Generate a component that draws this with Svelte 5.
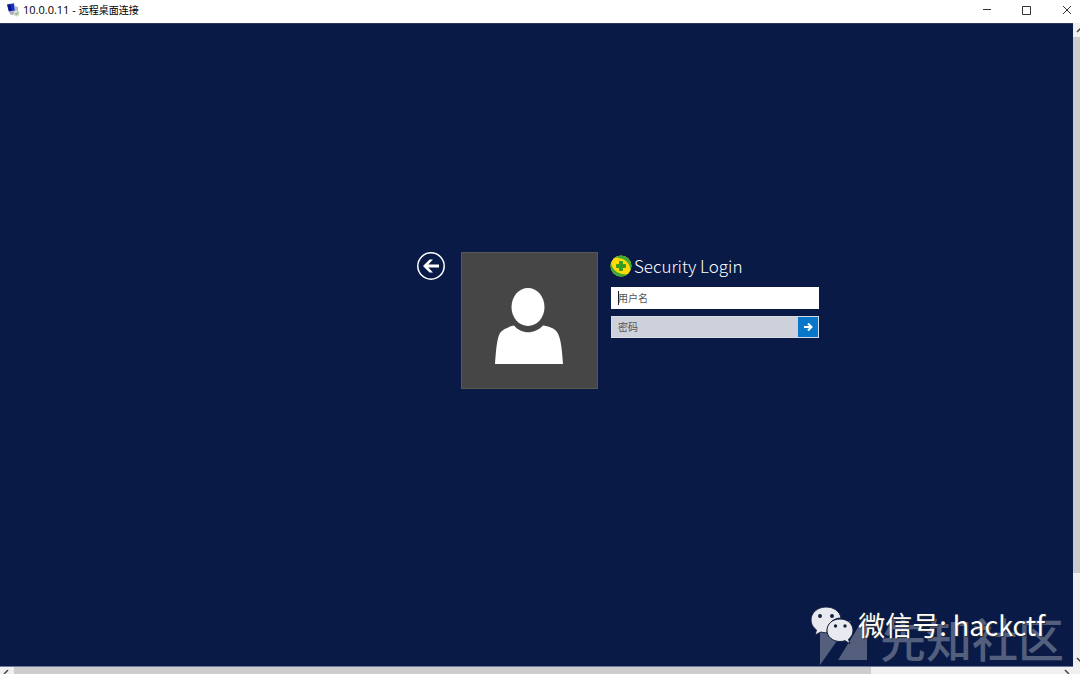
<script>
  let user = $state('');
  let password = $state('');
</script>

<div class="window">
  <header class="titlebar">
    <svg class="app-icon" viewBox="0 0 14 14" aria-hidden="true">
      <path d="M1 1 8 0l1 8-6 1z" fill="#c5cbe0" />
      <path d="M1 1.500 8 .5l.8 7-6 1z" fill="#1730c4" />
      <path d="M1.500 2 4.500 1.500 6 7.500 3 8z" fill="#08158a" />
      <path d="M9 3l3 1v7l-3-1z" fill="#b4b9c8" />
      <path d="M3 9l5-1 2 3-5 1z" fill="#a5a9b7" />
      <circle cx="10.500" cy="10.500" r="3" fill="#d4ddd2" />
      <path d="M9 10.500l1.200 1.200 2-2.500" fill="none" stroke="#6ba35c" />
    </svg>
    <h1>10.0.0.11 - <span>远程桌面连接</span></h1>
    <div class="controls">
      <button aria-label="最小化"><svg viewBox="0 0 10 10"><path d="M1 4.500h8" /></svg></button>
      <button aria-label="最大化"><svg viewBox="0 0 10 10"><path d="M.5 1.500h8v8h-8z" /></svg></button>
      <button aria-label="关闭"><svg viewBox="0 0 10 10"><path d="M1 1l8 8M9 1L1 9" /></svg></button>
    </div>
  </header>

  <main class="desktop">
    <form class="login" onsubmit={(e) => e.preventDefault()}>
      <button type="button" class="back" aria-label="返回">
        <svg viewBox="0 0 28 28">
          <circle cx="14" cy="14" r="13.200" fill="none" stroke="#fff" stroke-width="1.500" />
          <path d="M6 14l6.500-6.500H16L11.300 12.500H22v3H11.300L16 20.500h-3.500z" fill="#fff" />
        </svg>
      </button>
      <div class="avatar">
        <svg viewBox="0 0 68 76" aria-hidden="true">
          <ellipse cx="33" cy="19" rx="16.500" ry="19" />
          <path d="M0 76C1 62 2 50 5 45c3-4 8-6 14-7.500 7 9 21 9 29 0 5 .5 11 2.500 14 6.500 4 6 5 18 6 32z" />
        </svg>
      </div>
      <div class="fields">
        <h2>
          <svg viewBox="0 0 22 22" aria-hidden="true">
            <circle cx="11" cy="11" r="10.500" fill="#ffda08" />
            <path d="M5 2.500C9-.5 16 0 19.500 5c2 3.500 2.300 6.500 1 10C20 9 16 4.500 11 3.500 9 3 7 2.500 5 2.500z" fill="#3daa35" />
            <path d="M17 19.500c-4 3.500-11 2.500-14.500-2.500C.5 13.500 0 11 1 7.500 1.500 13 6 17.500 11 18.700c2 .6 4 .8 6 .8z" fill="#3daa35" />
            <path d="M9.500 6.500h3v3h3v3h-3v3h-3v-3h-3v-3h3z" fill="#359e20" stroke="#359e20" stroke-linejoin="round" />
          </svg>
          Security Login
        </h2>
        <div class="field active">
          <span class="caret"></span>
          <input type="text" aria-label="用户名" placeholder="用户名" bind:value={user} />
        </div>
        <div class="field">
          <input type="password" aria-label="密码" placeholder="密码" bind:value={password} />
          <button class="submit" aria-label="提交">
            <svg viewBox="0 0 10 10"><path d="M1 5h7M5 1.500L8.500 5 5 8.500" /></svg>
          </button>
        </div>
      </div>
    </form>

    <div class="community">
      <svg viewBox="0 0 47 48" aria-hidden="true"><path d="M0 3h31L0 47zM47 3v39H18L42 3z" /></svg>
      <span>先知社区</span>
    </div>
    <div class="wechat">
      <svg viewBox="0 0 42 37" aria-hidden="true">
        <path d="M15 0C6.500 0 0 5.800 0 13c0 4 2 7.500 5.500 10L4 28l6-3c2 .6 3.500.8 6 .8C16 17 22 11 30 11 29 4.500 23 0 15 0z" />
        <path d="M29 12c-7.500 0-13 5-13 11.300S21.500 34.500 29 34.500c1.800 0 3.300-.3 5-.8l5 3-1.500-4.500c3-2.200 4.500-5.200 4.500-8.900C42 17 36.500 12 29 12z" />
        <g class="eyes"><circle cx="9" cy="9" r="2" /><circle cx="21" cy="9" r="2" /><circle cx="24.500" cy="19" r="1.700" /><circle cx="34" cy="19" r="1.700" /></g>
      </svg>
      <span>微信号: hackctf</span>
    </div>
  </main>

  <div class="vbar">
    <svg viewBox="0 0 7 14"><path d="M4 9l4-4" /></svg>
    <div class="track"><div class="thumb"></div></div>
    <svg viewBox="0 0 7 14"><path d="M4 5l4 4" /></svg>
  </div>
  <div class="hbar">
    <svg viewBox="0 0 14 7"><path d="M8 3L4 7" /></svg>
    <div class="track"><div class="thumb"></div></div>
    <svg viewBox="0 0 14 7"><path d="M6 3l4 4" /></svg>
  </div>
</div>

<style>
  :global(body) { margin: 0; }
  * { box-sizing: border-box; }
  .window {
    display: grid;
    grid-template: 23px minmax(0, 1fr) 7px / minmax(0, 1fr) 7px;
    height: 100vh;
    overflow: hidden;
    background: #f0f0f0;
    font-family: "Open Sans", "Noto Sans CJK SC", sans-serif;
  }
  button { padding: 0; border: 0; background: none; display: grid; place-items: center; }
  h1, h2 { margin: 0; }
  .titlebar { grid-column: 1 / -1; display: flex; align-items: center; padding-left: 6px; gap: 3px; background: #fff; padding-bottom: 3px; }
  .app-icon { width: 14px; height: 14px; }
  h1 { font-size: 11px; font-weight: 400; color: #000; line-height: 20px; }
  h1 span { font-size: 10px; }
  .controls { display: flex; margin-left: auto; }
  .controls button { width: 40px; height: 20px; }
  .controls button:last-child { width: 26px; margin-left: 7px; }
  .controls svg { width: 10px; height: 10px; fill: none; stroke: #333; stroke-width: 1; }
  .desktop { position: relative; background: #081a45; border-top: 1px solid #29375c; border-bottom: 1px solid #6f7b96; overflow: hidden; }
  .login { display: flex; align-items: flex-start; padding: 228px 0 0 417px; }
  .back { width: 28px; height: 28px; margin-right: 16px; }
  .back svg { width: 28px; height: 28px; }
  .avatar { width: 137px; height: 137px; background: #464646; border: 1px solid #555850; display: flex; padding: 35px 0 0 33px; }
  .avatar svg { width: 68px; height: 76px; fill: #fff; }
  .fields { width: 208px; margin-left: 13px; display: grid; gap: 7px; }
  h2 { display: flex; align-items: center; gap: 2px; height: 28px; font: 300 17px/28px "Noto Sans CJK SC", sans-serif; color: #fff; white-space: nowrap; }
  h2 svg { width: 22px; height: 22px; margin-left: -1px; }
  .field { display: flex; position: relative; height: 22px; background: #cdd1dc; border: 1px solid #d8dbe3; }
  .field.active { background: #fff; border-color: #fff; }
  input { flex: 1; min-width: 0; padding: 0 6px 1px; border: 0; outline: 0; background: transparent; font: 10px "Noto Sans CJK SC", sans-serif; color: #333; }
  input::placeholder { color: #555; opacity: 1; }
  .caret { position: absolute; left: 6px; top: 3px; width: 1px; height: 14px; background: #222; }
  .submit { width: 20px; height: 20px; background: #0877c9; }
  .submit svg { width: 10px; height: 10px; fill: none; stroke: #fff; stroke-width: 2; }
  .community { position: absolute; right: 9px; bottom: 0; display: flex; align-items: flex-end; gap: 13px; color: #fff; opacity: .3; font: 500 46px/58px "Noto Sans CJK SC", sans-serif; }
  .community svg { width: 47px; height: 48px; fill: #fff; }
  .wechat { position: absolute; right: 28px; bottom: 21px; display: flex; align-items: center; gap: 5px; color: #fff; font: 27px/40px "Noto Sans CJK SC", sans-serif; text-shadow: 1px 1px 1px #333; white-space: nowrap; }
  .wechat svg { width: 42px; height: 37px; fill: #e8eaf0; stroke: #17233f; stroke-width: 1; }
  .wechat .eyes { fill: #17233f; stroke: none; }
  .vbar { display: flex; flex-direction: column; }
  .vbar svg { width: 7px; height: 14px; }
  .track { flex: 1; }
  .vbar .thumb { height: 87%; background: #cdcdcd; }
  .hbar { display: flex; grid-column: 1 / -1; padding-right: 7px; }
  .hbar svg { width: 14px; height: 7px; }
  .hbar .thumb { width: 82%; height: 100%; background: #cdcdcd; }
  .vbar svg, .hbar svg { flex: none; fill: none; stroke: #444; stroke-width: 1.500; }
</style>
